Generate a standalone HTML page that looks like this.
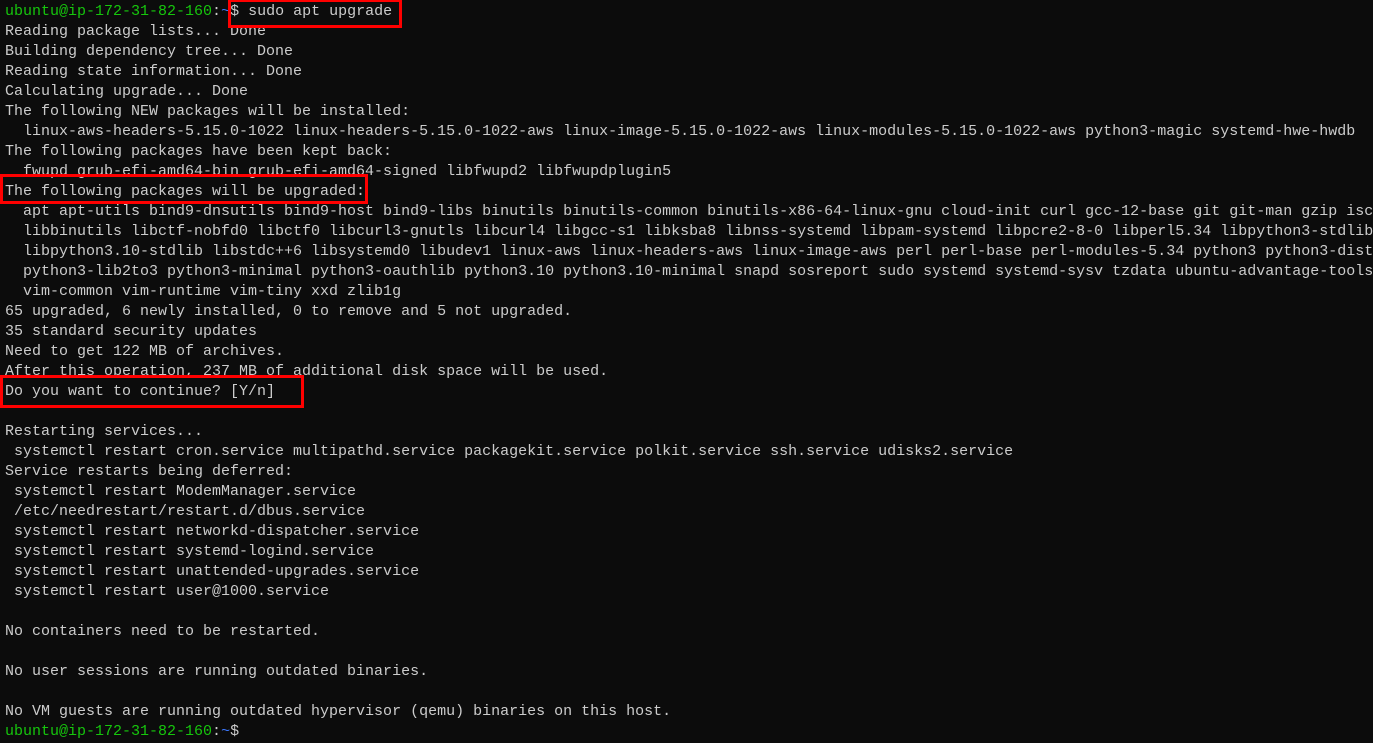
<!DOCTYPE html>
<html><head><meta charset="utf-8"><style>
html,body{margin:0;padding:0;background:#0c0c0c;width:1373px;height:743px;overflow:hidden}
pre{margin:0;position:absolute;left:5px;top:2px;font-family:"Liberation Mono",monospace;font-size:15px;line-height:20px;color:#cccccc;white-space:pre}
.g{color:#16c60c}.b{color:#3b78ff}
.box{position:absolute;border:3px solid #ff0000;box-sizing:border-box}
</style></head><body>
<pre><span class="g">ubuntu@ip-172-31-82-160</span>:<span class="b">~</span>$ sudo apt upgrade
Reading package lists... Done
Building dependency tree... Done
Reading state information... Done
Calculating upgrade... Done
The following NEW packages will be installed:
  linux-aws-headers-5.15.0-1022 linux-headers-5.15.0-1022-aws linux-image-5.15.0-1022-aws linux-modules-5.15.0-1022-aws python3-magic systemd-hwe-hwdb
The following packages have been kept back:
  fwupd grub-efi-amd64-bin grub-efi-amd64-signed libfwupd2 libfwupdplugin5
The following packages will be upgraded:
  apt apt-utils bind9-dnsutils bind9-host bind9-libs binutils binutils-common binutils-x86-64-linux-gnu cloud-init curl gcc-12-base git git-man gzip isc
  libbinutils libctf-nobfd0 libctf0 libcurl3-gnutls libcurl4 libgcc-s1 libksba8 libnss-systemd libpam-systemd libpcre2-8-0 libperl5.34 libpython3-stdlib
  libpython3.10-stdlib libstdc++6 libsystemd0 libudev1 linux-aws linux-headers-aws linux-image-aws perl perl-base perl-modules-5.34 python3 python3-dist
  python3-lib2to3 python3-minimal python3-oauthlib python3.10 python3.10-minimal snapd sosreport sudo systemd systemd-sysv tzdata ubuntu-advantage-tools
  vim-common vim-runtime vim-tiny xxd zlib1g
65 upgraded, 6 newly installed, 0 to remove and 5 not upgraded.
35 standard security updates
Need to get 122 MB of archives.
After this operation, 237 MB of additional disk space will be used.
Do you want to continue? [Y/n]

Restarting services...
 systemctl restart cron.service multipathd.service packagekit.service polkit.service ssh.service udisks2.service
Service restarts being deferred:
 systemctl restart ModemManager.service
 /etc/needrestart/restart.d/dbus.service
 systemctl restart networkd-dispatcher.service
 systemctl restart systemd-logind.service
 systemctl restart unattended-upgrades.service
 systemctl restart user@1000.service

No containers need to be restarted.

No user sessions are running outdated binaries.

No VM guests are running outdated hypervisor (qemu) binaries on this host.
<span class="g">ubuntu@ip-172-31-82-160</span>:<span class="b">~</span>$</pre>
<div class="box" style="left:228px;top:-1px;width:174px;height:29px"></div>
<div class="box" style="left:0;top:174px;width:368px;height:30px"></div>
<div class="box" style="left:0;top:375px;width:304px;height:33px"></div>
</body></html>
